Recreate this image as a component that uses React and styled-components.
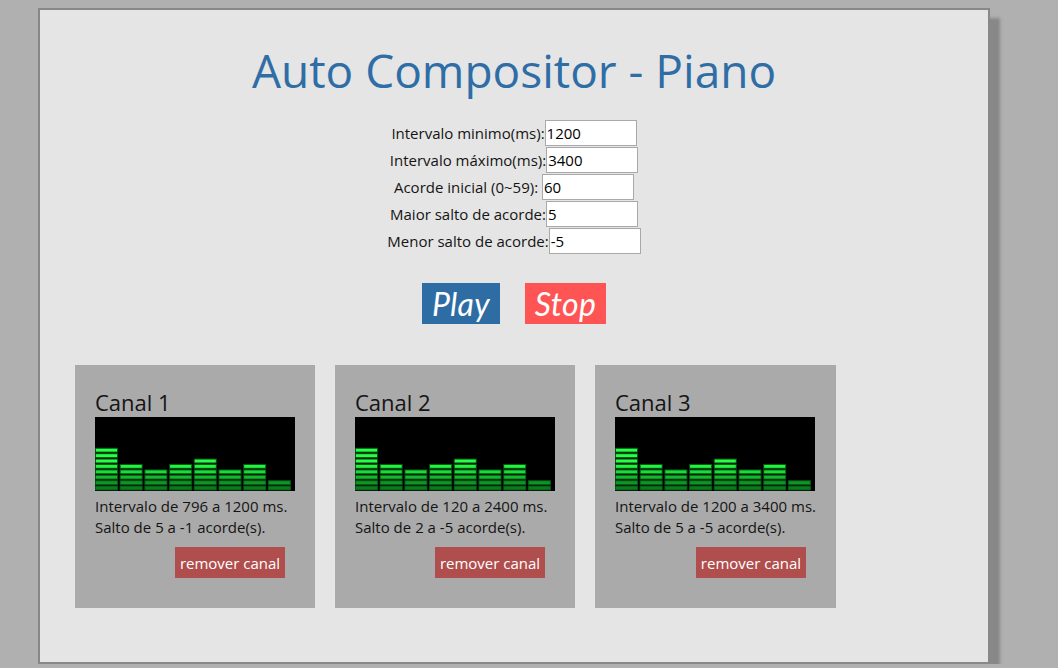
import React from "react";
import styled, { createGlobalStyle } from "styled-components";

const Global = createGlobalStyle`
  html, body { margin: 0; padding: 0; background: #b0b0b0; }
  body { font-family: "Open Sans", "Noto Sans", sans-serif; }
  #root { padding: 8px 0 0 38px; }
`;

const Page = styled.div`
  box-sizing: border-box;
  width: 952px;
  height: 656px;
  background: #e5e5e5;
  border: 2px solid #888;
  box-shadow: 10px 10px 3px #888;
  display: flex;
  flex-direction: column;
  align-items: center;
`;

const Title = styled.h1`
  margin: 31px 0 0;
  font-size: 46px;
  line-height: 58px;
  font-weight: 400;
  color: #2e6da6;
`;

const Form = styled.div`
  margin-top: 20px;
  display: flex;
  flex-direction: column;
`;

const Row = styled.div`
  display: flex;
  justify-content: center;
  align-items: center;
  height: 27px;
  font-size: 15px;
  color: #141414;
`;

const Label = styled.label`
  white-space: pre;
`;

const Input = styled.input`
  box-sizing: border-box;
  width: 92px;
  height: 26px;
  border: 1px solid #a9a9a9;
  padding: 0 1px;
  font-family: inherit;
  font-size: 15px;
  color: #000;
  background: #fff;
`;

const Controls = styled.div`
  margin-top: 29px;
  display: flex;
  gap: 25px;
`;

const BigButton = styled.button`
  height: 41px;
  padding: 0 10px;
  border: none;
  background: ${(p) => p.$bg};
  color: #fff;
  font-family: "Lato", "Open Sans", sans-serif;
  font-style: italic;
  font-size: 32px;
  line-height: 41px;
  letter-spacing: 0.3px;
`;

const Cards = styled.div`
  align-self: stretch;
  margin-top: 41px;
  padding-left: 35px;
  display: flex;
  gap: 20px;
  align-items: flex-start;
`;

const Card = styled.div`
  background: #aaaaaa;
  padding: 20px;
  display: flex;
  flex-direction: column;
  color: #141414;
`;

const CardTitle = styled.div`
  font-size: 22px;
  line-height: 32px;
  padding-top: 1px;
  margin-bottom: -1px;
`;

const Info = styled.div`
  margin-top: 5px;
  font-size: 15px;
  line-height: 21px;
  white-space: nowrap;
`;

const RemoveButton = styled.button`
  align-self: flex-end;
  margin: 9px 10px 10px 0;
  width: 110px;
  height: 31px;
  border: none;
  background: #b04e4e;
  color: #fff;
  font-family: inherit;
  font-size: 15px;
  padding: 0;
`;

const EqBox = styled.svg`
  display: block;
  background: #000;
`;

const LEVELS = [8, 5, 4, 5, 6, 4, 5, 2];
const ROW_COLORS = ["#0a7a1e", "#0c9624", "#12b82e", "#1adc38", "#22f540", "#26ff46", "#26ff46", "#26ff46"];

function Equalizer() {
  const pitch = 5.4;
  return (
    <EqBox width="200" height="74" viewBox="0 0 200 74">
      {LEVELS.map((n, c) =>
        Array.from({ length: n }).map((_, r) => {
          const x = c * 24.7;
          const y = 74 - (r + 1) * pitch;
          return (
            <g key={`${c}-${r}`}>
              <rect x={x} y={y} width="23" height={pitch - 0.6} fill="#075a16" />
              <rect x={x + 1} y={y + 1} width="21" height={pitch - 2.6} fill={ROW_COLORS[r]} />
            </g>
          );
        })
      )}
    </EqBox>
  );
}

const fields = [
  ["Intervalo minimo(ms):", "1200"],
  ["Intervalo máximo(ms):", "3400"],
  ["Acorde inicial (0~59): ", "60"],
  ["Maior salto de acorde:", "5"],
  ["Menor salto de acorde:", "-5"],
];

const channels = [
  { name: "Canal 1", min: 796, max: 1200, hi: 5, lo: -1 },
  { name: "Canal 2", min: 120, max: 2400, hi: 2, lo: -5 },
  { name: "Canal 3", min: 1200, max: 3400, hi: 5, lo: -5 },
];

export default function App() {
  return (
    <>
      <Global />
      <Page>
        <Title>Auto Compositor - Piano</Title>
        <Form>
          {fields.map(([l, v]) => (
            <Row key={l}>
              <Label>{l}</Label>
              <Input defaultValue={v} />
            </Row>
          ))}
        </Form>
        <Controls>
          <BigButton $bg="#2e6da4">Play</BigButton>
          <BigButton $bg="#ff5454">Stop</BigButton>
        </Controls>
        <Cards>
          {channels.map((ch) => (
            <Card key={ch.name}>
              <CardTitle>{ch.name}</CardTitle>
              <Equalizer />
              <Info>
                Intervalo de {ch.min} a {ch.max} ms.
                <br />
                Salto de {ch.hi} a {ch.lo} acorde(s).
              </Info>
              <RemoveButton>remover canal</RemoveButton>
            </Card>
          ))}
        </Cards>
      </Page>
    </>
  );
}
